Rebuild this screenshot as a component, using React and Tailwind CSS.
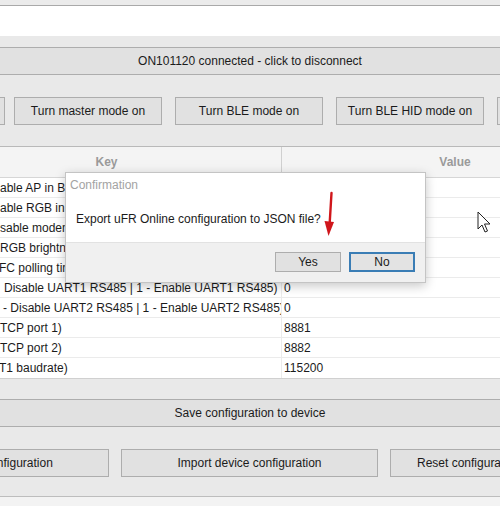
import React from "react";

const rows = [
  { k: "able AP in BT configuration mode", v: "1", pad: "pl-[68px]" },
  { k: "able RGB in BT configuration mode", v: "1", pad: "pl-[68px]" },
  { k: "sable modem", v: "0", pad: "pl-[68px]" },
  { k: "RGB brightness", v: "50", pad: "pl-[68px]" },
  { k: "FC polling time", v: "100", pad: "pl-[67px]" },
  { k: "Disable UART1 RS485 | 1 - Enable UART1 RS485)", v: "0", pad: "pl-[72px]" },
  { k: "- Disable UART2 RS485 | 1 - Enable UART2 RS485)", v: "0", pad: "pl-[71px]" },
  { k: "TCP port 1)", v: "8881", pad: "pl-[68px]" },
  { k: "TCP port 2)", v: "8882", pad: "pl-[68px]" },
  { k: "T1 baudrate)", v: "115200", pad: "pl-[67px]" },
];

function Btn({ children, className = "" }) {
  return (
    <div
      className={`shrink-0 h-[28px] border border-[#adadad] bg-[#e1e1e1] flex items-center justify-center whitespace-nowrap overflow-hidden ${className}`}
    >
      {children}
    </div>
  );
}

export default function App() {
  return (
    <div className="relative w-[500px] h-[506px] overflow-hidden bg-[#e9e9e9] font-['Liberation_Sans',Arial,sans-serif] text-[12px] text-[#1b1b1b] leading-none">
      <div className="h-[6px] bg-[#ebebeb] border-b border-[#a9a9a9]" />
      <div className="h-[30px] bg-white" />
      <div className="h-[11px]" />
      <Btn className="-mx-2">ON101120 connected - click to disconnect</Btn>
      <div className="mt-[22px] flex ml-[-143px]">
        <Btn className="w-[148px] mr-[9px]">Turn slave mode on</Btn>
        <Btn className="w-[148px] mr-[13px]">Turn master mode on</Btn>
        <Btn className="w-[148px] mr-[13px]">Turn BLE mode on</Btn>
        <Btn className="w-[148px] mr-[13px]">Turn BLE HID mode on</Btn>
        <Btn className="w-[148px]">Turn off</Btn>
      </div>

      <div className="mt-[21px] ml-[-68px] w-[700px] bg-white border-t border-[#b9b9b9] border-b border-b-[#d0d0d0]">
        <div className="flex h-[31px] bg-[#f4f4f4] border-b border-[#d6d6d6] font-bold text-[#9a9a9a]">
          <div className="w-[350px] flex items-center justify-center border-r border-[#d0d0d0]">Key</div>
          <div className="w-[346px] flex items-center justify-center">Value</div>
        </div>
        {rows.map((r, i) => (
          <div key={i} className={`flex h-[20px] ${i < rows.length - 1 ? "border-b border-[#ebebeb]" : ""}`}>
            <div className={`w-[350px] flex items-center whitespace-nowrap overflow-hidden border-r border-[#ebebeb] ${r.pad}`}>
              {r.k}
            </div>
            <div className="w-[346px] flex items-center pl-[2px]">{r.v}</div>
          </div>
        ))}
      </div>

      <div className="mt-[20px]">
        <Btn className="-mx-2">Save configuration to device</Btn>
      </div>
      <div className="mt-[22px] flex ml-[-148px]">
        <Btn className="w-[257px] mr-[12px]">Export device configuration</Btn>
        <Btn className="w-[257px] mr-[12px]">Import device configuration</Btn>
        <Btn className="w-[257px] justify-start pl-[26px]">Reset configuration</Btn>
      </div>
      <div className="mt-[19px] h-[1px] bg-[#bdbdbd]" />
      <div className="h-[9px] bg-[#f3f3f3]" />

      {/* Confirmation dialog */}
      <div className="absolute left-[65px] top-[172px] w-[361px] h-[111px] border border-[#c4c4c4] bg-white shadow-[0_3px_10px_rgba(0,0,0,0.22)] flex flex-col">
        <div className="h-[24px] flex items-center pl-[4px] text-[#a3a3a3]">Confirmation</div>
        <div className="h-[45px] flex items-center pl-[10px] pb-[2px]">Export uFR Online configuration to JSON file?</div>
        <div className="flex-1 bg-[#f0f0f0] border-t border-[#e2e2e2] flex items-start justify-end pt-[9px] pr-[10px] gap-[8px]">
          <div className="w-[66px] h-[20px] border border-[#adadad] bg-[#e1e1e1] flex items-center justify-center">Yes</div>
          <div className="w-[66px] h-[20px] border-2 border-[#3a7db5] bg-[#e3e3e3] flex items-center justify-center">No</div>
        </div>
      </div>

      {/* red annotation arrow */}
      <svg className="absolute left-[320px] top-[188px]" width="20" height="52" viewBox="0 0 20 52">
        <path d="M11.5 5 L9.5 38" stroke="#d0161b" strokeWidth="2.4" strokeLinecap="round" fill="none" />
        <path d="M4.5 33 L14 34 L8.5 48 Z" fill="#d0161b" />
      </svg>

      {/* mouse cursor */}
      <svg className="absolute left-[477px] top-[211px]" width="14" height="23" viewBox="0 0 14 23">
        <path d="M1 1 L1 18 L5 14 L8 21 L10.5 20 L7.5 13 L13 13 Z" fill="#ffffff" stroke="#222" strokeWidth="1" strokeLinejoin="round" />
      </svg>
    </div>
  );
}
